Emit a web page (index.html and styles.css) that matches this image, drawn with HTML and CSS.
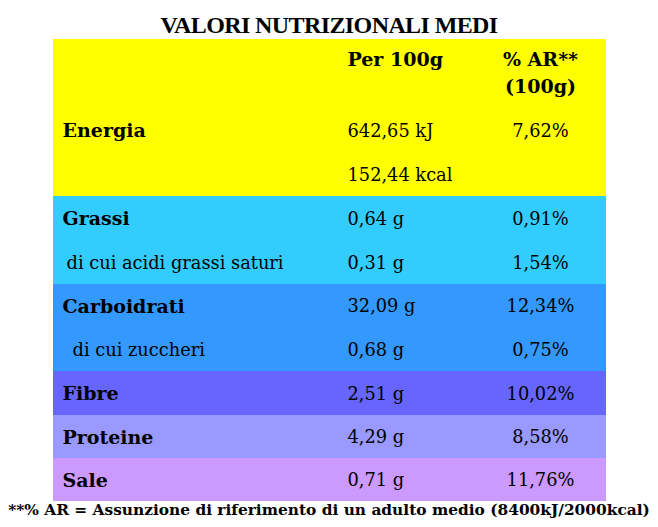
FILE: index.html
```html
<!DOCTYPE html>
<html lang="it">
<head>
<meta charset="utf-8">
<title>Valori nutrizionali medi</title>
<link rel="stylesheet" href="styles.css">
</head>
<body>
<div class="page">
  <h1 class="title">VALORI NUTRIZIONALI MEDI</h1>
  <table class="nutri">
    <colgroup>
      <col class="c1"><col class="c2"><col class="c3">
    </colgroup>
    <tr class="head yellow">
      <td></td>
      <td class="b">Per 100g</td>
      <td class="b ctr">% AR**<br>(100g)</td>
    </tr>
    <tr class="yellow">
      <td class="b">Energia</td>
      <td>642,65 kJ</td>
      <td class="ctr">7,62%</td>
    </tr>
    <tr class="yellow">
      <td></td>
      <td>152,44 kcal</td>
      <td></td>
    </tr>
    <tr class="cyan">
      <td class="b">Grassi</td>
      <td>0,64 g</td>
      <td class="ctr">0,91%</td>
    </tr>
    <tr class="cyan">
      <td class="sub1">di cui acidi grassi saturi</td>
      <td>0,31 g</td>
      <td class="ctr">1,54%</td>
    </tr>
    <tr class="blue">
      <td class="b">Carboidrati</td>
      <td>32,09 g</td>
      <td class="ctr">12,34%</td>
    </tr>
    <tr class="blue">
      <td class="sub2">di cui zuccheri</td>
      <td>0,68 g</td>
      <td class="ctr">0,75%</td>
    </tr>
    <tr class="violet">
      <td class="b">Fibre</td>
      <td>2,51 g</td>
      <td class="ctr">10,02%</td>
    </tr>
    <tr class="lilac">
      <td class="b">Proteine</td>
      <td>4,29 g</td>
      <td class="ctr">8,58%</td>
    </tr>
    <tr class="mauve">
      <td class="b">Sale</td>
      <td>0,71 g</td>
      <td class="ctr">11,76%</td>
    </tr>
  </table>
  <p class="note">**% AR = Assunzione di riferimento di un adulto medio (8400kJ/2000kcal)</p>
</div>
</body>
</html>
```

FILE: styles.css
```css
html, body {
  margin: 0;
  padding: 0;
  background: #ffffff;
}
.page {
  width: 658px;
  display: flex;
  flex-direction: column;
  align-items: center;
  color: #000;
  font-family: "DejaVu Serif", Georgia, serif;
}
.title {
  margin: 11px 0 0 0;
  height: 28px;
  font-family: "Liberation Serif", "Times New Roman", serif;
  font-size: 24px;
  line-height: 28px;
  font-weight: bold;
  letter-spacing: -0.6px;
}
.nutri {
  width: 553px;
  border-collapse: collapse;
  table-layout: fixed;
  font-size: 17.8px;
}
.c1 { width: 285px; }
.c2 { width: 138px; }
.c3 { width: 130px; }
.nutri td {
  height: 44px;
  padding: 0 0 0 10px;
  vertical-align: middle;
  white-space: nowrap;
}
.nutri tr.blue td { height: 43.5px; }
.nutri tr.lilac td,
.nutri tr.mauve td { height: 43px; }
.nutri td.ctr {
  text-align: center;
  padding: 0;
}
.nutri tr.head td {
  height: 69px;
  vertical-align: top;
  padding-top: 7px;
  line-height: 27px;
  box-sizing: border-box;
}
.nutri tr.head td.ctr { padding-left: 0; }
.b { font-weight: bold; font-size: 19px; }
.sub1 { padding-left: 14px !important; }
.sub2 { padding-left: 20px !important; }
.yellow { background: #ffff00; }
.cyan { background: #33ccff; }
.blue { background: #3399ff; }
.violet { background: #6666ff; }
.lilac { background: #9999ff; }
.mauve { background: #cc99ff; }
.note {
  margin: 0;
  font-size: 15.4px;
  line-height: 18px;
  font-weight: bold;
  white-space: nowrap;
}
```
